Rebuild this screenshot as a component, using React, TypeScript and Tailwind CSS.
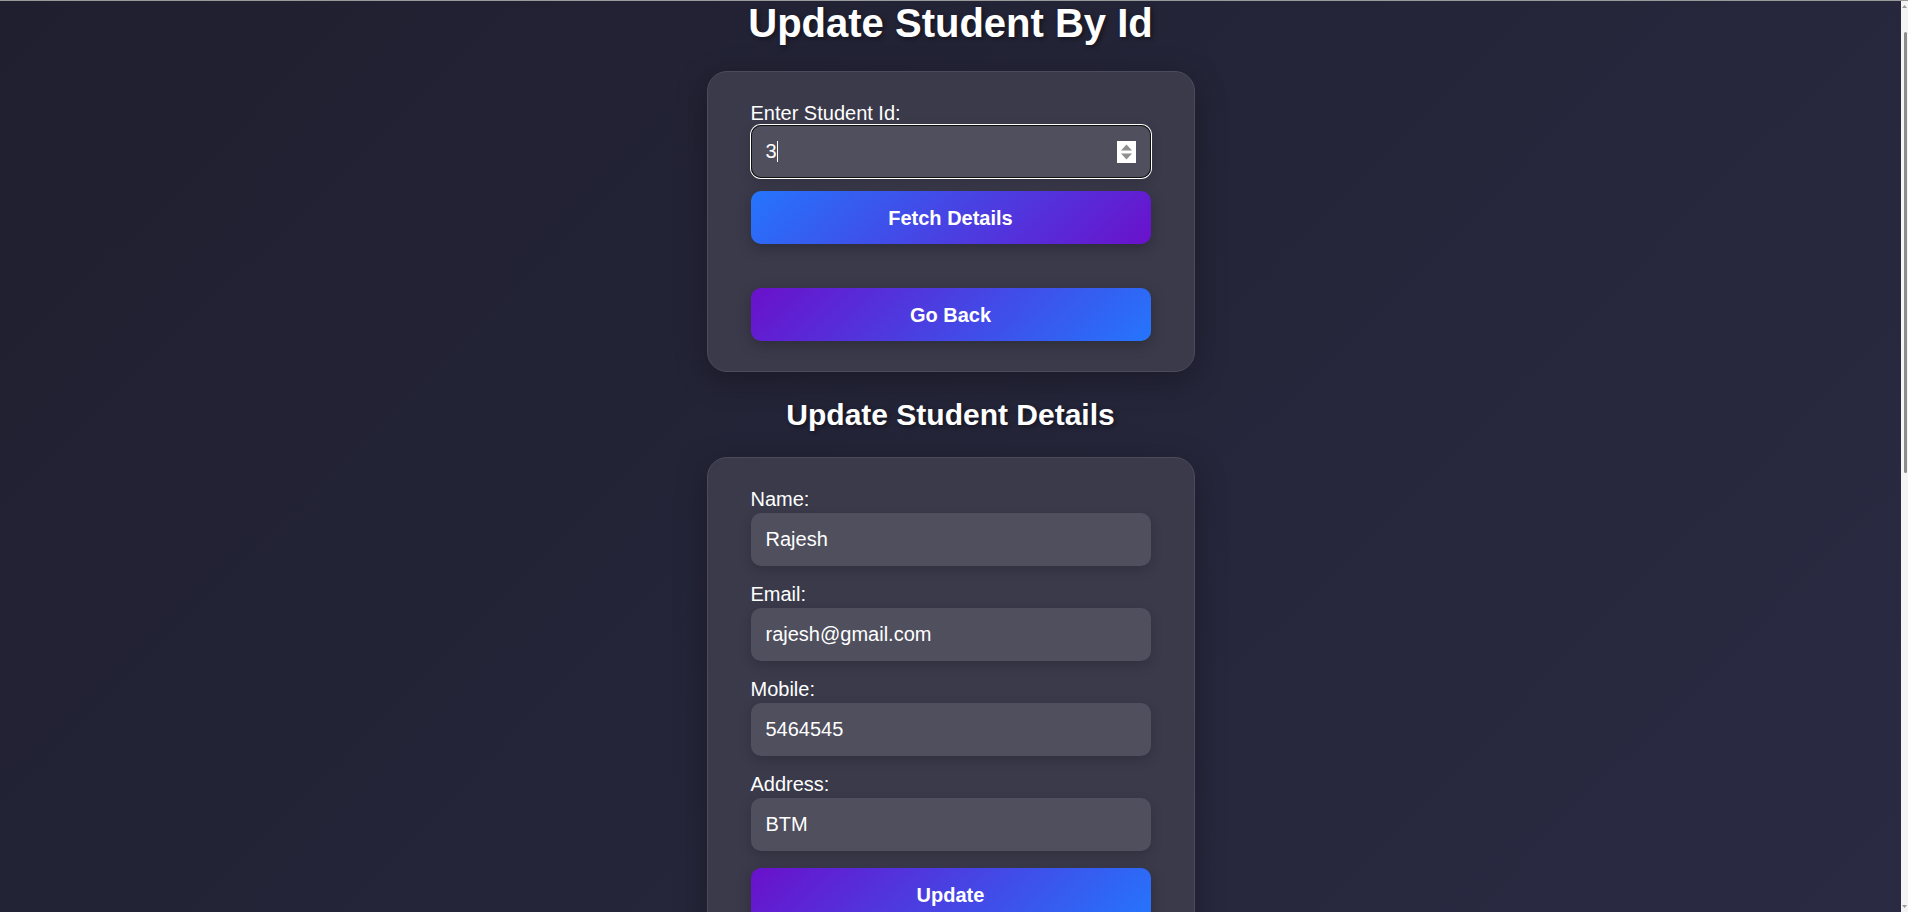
import React from "react";

const fields = [
  { label: "Name:", value: "Rajesh" },
  { label: "Email:", value: "rajesh@gmail.com" },
  { label: "Mobile:", value: "5464545" },
  { label: "Address:", value: "BTM" },
];

function Field({ label, value }: { label: string; value: string }) {
  return (
    <div className="mb-[17px]">
      <label className="block text-[20px] leading-[23px] text-white mb-[2px]">
        {label}
      </label>
      <input
        readOnly
        defaultValue={value}
        className="block w-full h-[53px] rounded-[10px] bg-[#4f4f5e] px-[15px] text-[20px] text-white outline-none shadow-[0_4px_12px_rgba(0,0,0,0.18)]"
      />
    </div>
  );
}

export default function App() {
  return (
    <div className="flex border-t border-[#9a9a9a] font-['Liberation_Sans',Arial,sans-serif] text-white">
      <div className="flex-1 min-h-[1850px] bg-[linear-gradient(135deg,#1f1f2f,#2a2b43)] bg-fixed flex flex-col items-center">
        <h1 className="text-[40px] leading-[45px] font-bold mb-[25px] [text-shadow:2px_2px_5px_rgba(0,0,0,0.45)]">
          Update Student By Id
        </h1>

        {/* Fetch card */}
        <div className="w-[488px] rounded-[20px] border border-[#4b4b5c] bg-[#3a3a4b] px-[43px] pt-[30px] pb-[30px] shadow-[0_8px_32px_rgba(0,0,0,0.3)]">
          <label className="block text-[20px] leading-[23px] text-white">
            Enter Student Id:
          </label>
          <div className="flex items-center h-[53px] rounded-[10px] bg-[#4f4f5e] pl-[15px] pr-[15px] shadow-[inset_0_0_0_1px_#101010,0_0_0_1px_#ffffff,0_4px_12px_rgba(0,0,0,0.18)]">
            <span className="text-[20px] leading-[23px]">3</span>
            <span className="w-px h-[21px] bg-white" />
            <div className="flex-1" />
            <div className="w-[19px] h-[22px] bg-white">
              <svg width="19" height="22" viewBox="0 0 19 22">
                <polygon points="4,9.5 9.5,3.5 15,9.5" fill="#8f8f8f" />
                <polygon points="4,12.5 9.5,18.5 15,12.5" fill="#8f8f8f" />
              </svg>
            </div>
          </div>
          <button className="mt-[13px] block w-full h-[53px] rounded-[10px] bg-[linear-gradient(135deg,#2575fc,#6a11cb)] text-[20px] font-bold text-white shadow-[0_4px_14px_rgba(0,0,0,0.25)]">
            Fetch Details
          </button>
          <button className="mt-[44px] block w-full h-[53px] rounded-[10px] bg-[linear-gradient(135deg,#6a11cb,#2575fc)] text-[20px] font-bold text-white shadow-[0_4px_14px_rgba(0,0,0,0.25)]">
            Go Back
          </button>
        </div>

        <h2 className="mt-[26px] mb-[25px] text-[30px] leading-[34px] font-bold [text-shadow:2px_2px_5px_rgba(0,0,0,0.45)]">
          Update Student Details
        </h2>

        {/* Update card */}
        <div className="w-[488px] rounded-[20px] border border-[#4b4b5c] bg-[#3a3a4b] px-[43px] pt-[30px] pb-[30px] shadow-[0_8px_32px_rgba(0,0,0,0.3)]">
          {fields.map((f) => (
            <Field key={f.label} label={f.label} value={f.value} />
          ))}
          <button className="mt-[2px] block w-full h-[53px] rounded-[10px] bg-[linear-gradient(135deg,#6a11cb,#2575fc)] text-[20px] font-bold text-white shadow-[0_4px_14px_rgba(0,0,0,0.25)]">
            Update
          </button>
        </div>
      </div>

      {/* scrollbar */}
      <div className="sticky top-0 h-[911px] w-[7px] bg-[#f4f4f4] flex flex-col items-center justify-between py-[3px]">
        <svg width="7" height="5" viewBox="0 0 7 5">
          <polygon points="1,4 3.5,1 6,4" fill="#9a9a9a" />
        </svg>
        <div className="flex-1 w-full pt-[23px]">
          <div className="ml-[3px] w-[3px] h-[441px] rounded-full bg-[#8c8c8c]" />
        </div>
        <svg width="7" height="5" viewBox="0 0 7 5">
          <polygon points="1,1 3.5,4 6,1" fill="#9a9a9a" />
        </svg>
      </div>
    </div>
  );
}
